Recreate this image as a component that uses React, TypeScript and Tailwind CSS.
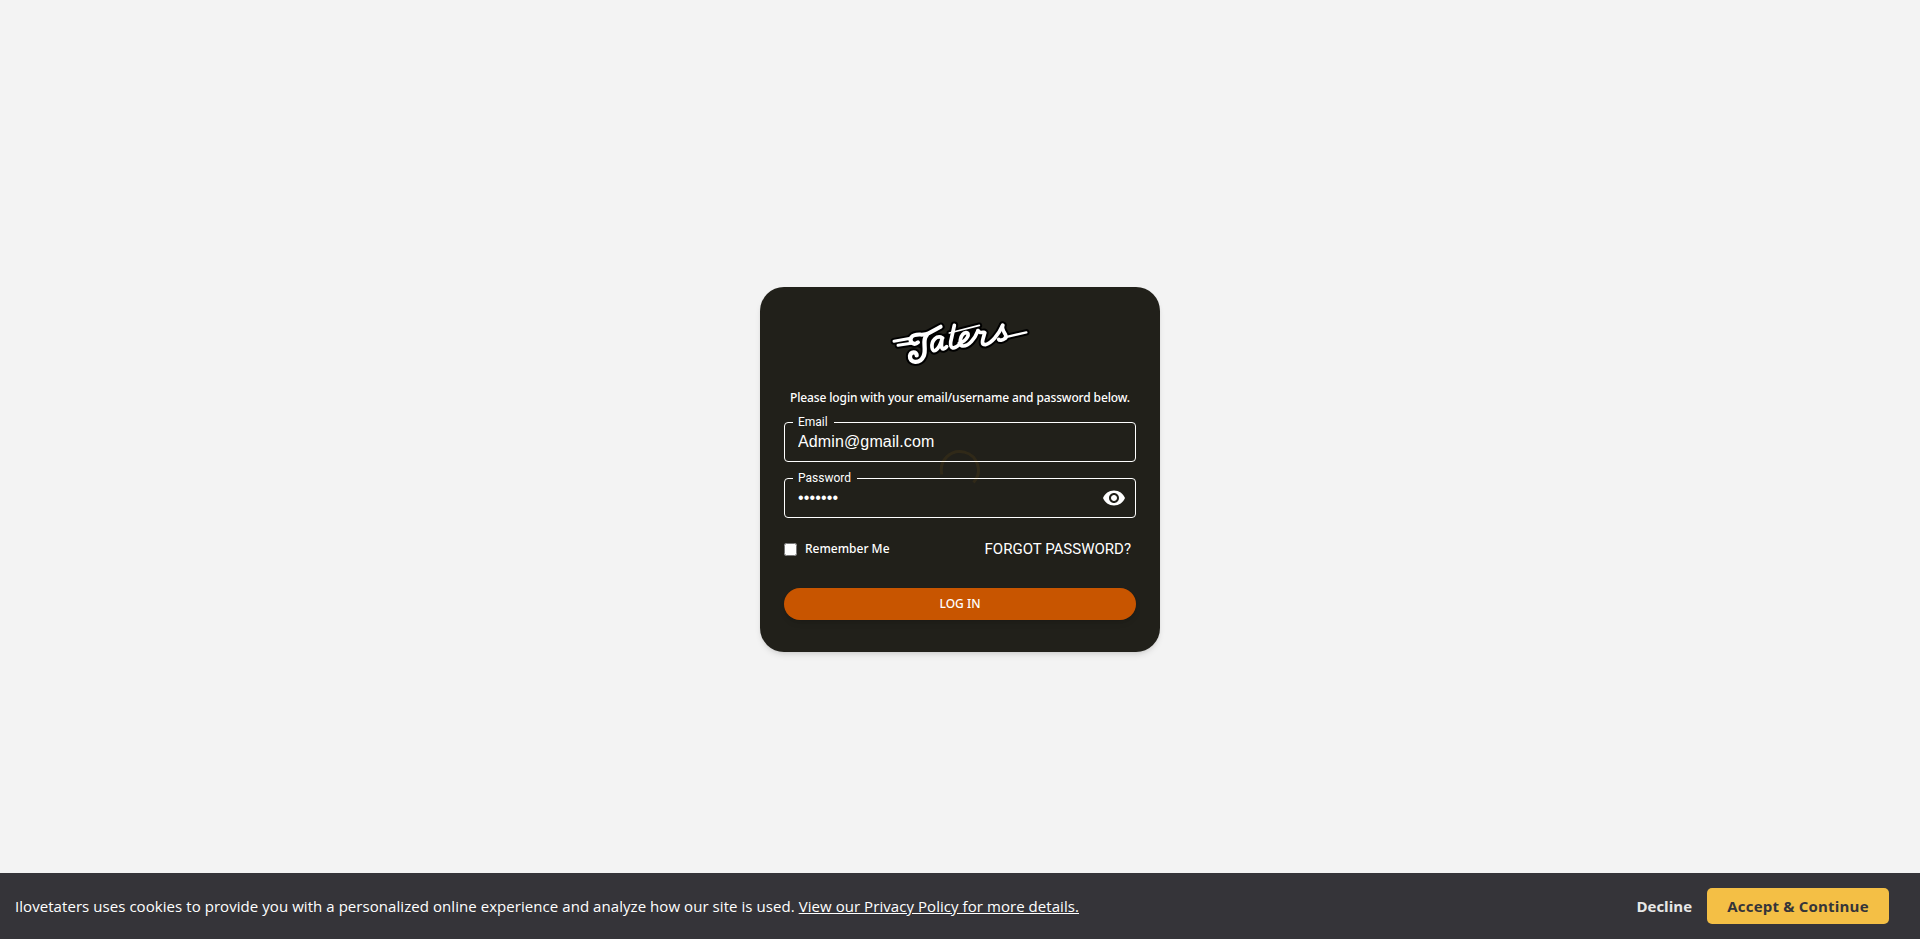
const wings = "M42 94 L92 85 M54 106 L94 100";
const strokes = [
  { d: "M114 97 C102 108 86 96 94 82 C106 66 128 80 146 70 L182 50", w: 12 },
  { d: "M140 76 C124 92 142 118 130 140 C120 162 88 160 90 138 C92 124 110 124 110 136", w: 13 },
  { d: "M188 84 C170 74 154 92 156 112 C158 132 176 122 186 88 C182 116 186 124 200 110", w: 11 },
  { d: "M223 46 L212 96 C210 118 222 118 238 104", w: 11 },
  { d: "M238 100 C262 92 272 68 258 68 C242 70 232 108 250 108 C266 108 284 88 294 62", w: 11 },
  { d: "M294 62 C298 74 318 62 314 70 C308 90 302 104 316 104 C334 100 356 74 368 46", w: 11 },
  { d: "M368 46 C362 64 388 78 374 86 C368 91 358 92 356 88", w: 11 },
  { d: "M374 82 L439 67", w: 7 },
  { d: "M208 69 L298 46", w: 5 },
];

function Logo() {
  return (
    <svg className="block h-[65px] w-[160px]" viewBox="0 0 480 195" fill="none" strokeLinecap="round" strokeLinejoin="round" aria-label="Taters">
      <g stroke="#000">
        <path d={wings} strokeWidth="20" />
        {strokes.map((s) => (
          <path key={s.d} d={s.d} strokeWidth={s.w + 12} />
        ))}
      </g>
      <path d="M100 84L140 80L190 72L298 48L280 90L230 112L150 126L110 110Z" fill="#000" />
      <g stroke="#fff">
        <path d={wings} strokeWidth="9" />
        {strokes.map((s) => (
          <path key={s.d} d={s.d} strokeWidth={s.w} />
        ))}
      </g>
    </svg>
  );
}

function Field({ label, type, value }: { label: string; type: string; value: string }) {
  return (
    <div className="relative h-10">
      <fieldset className="absolute inset-x-0 -top-[6px] bottom-0 rounded-[4px] border border-white pl-2">
        <legend className="h-3 pr-[6px] pl-[5px] font-['Roboto',sans-serif] text-xs leading-[13px] text-white">{label}</legend>
      </fieldset>
      <div className="relative flex h-10 items-center pr-[10px] pl-[14px]">
        <input
          type={type}
          defaultValue={value}
          aria-label={label}
          className="min-w-0 flex-1 bg-transparent pb-px font-['Liberation_Sans',sans-serif] text-base tracking-[0.13px] text-white outline-none"
        />
        {type === "password" && (
          <svg className="size-6" viewBox="0 0 24 24" fill="#fff">
            <path d="M12 4.5C7 4.5 2.73 7.61 1 12c1.73 4.39 6 7.5 11 7.5s9.27-3.11 11-7.5c-1.73-4.39-6-7.5-11-7.5M12 17c-2.76 0-5-2.24-5-5s2.24-5 5-5 5 2.24 5 5-2.24 5-5 5m0-8c-1.66 0-3 1.34-3 3s1.34 3 3 3 3-1.34 3-3-1.34-3-3-3" />
          </svg>
        )}
      </div>
    </div>
  );
}

export default function App() {
  return (
    <div className="relative flex h-[939px] flex-col bg-[#f3f3f3]">
      <main className="flex h-[939px] flex-col items-center pt-[287px]">
        <section className="flex h-[365px] w-[400px] flex-col rounded-3xl bg-[#21201a] px-6 pt-[23px] shadow-md">
          <div className="flex justify-center">
            <Logo />
          </div>
          <p className="mt-[14px] -mr-2 -ml-2 h-[18px] text-center font-['Noto_Sans',sans-serif] text-xs leading-[18px] font-medium tracking-[-0.13px] whitespace-nowrap text-white">
            Please login with your email/username and password below.
          </p>
          <div className="mt-[15px] flex flex-col gap-4">
            <Field label="Email" type="text" value="Admin@gmail.com" />
            <Field label="Password" type="password" value="1234567" />
          </div>
          <div className="mt-[19px] flex h-6 items-center justify-between pr-[5px]">
            <label className="flex items-center gap-2 font-['Noto_Sans',sans-serif] text-xs font-medium text-white">
              <input type="checkbox" className="size-[13px]" />
              Remember Me
            </label>
            <a className="font-['Roboto',sans-serif] text-[15px] text-white">FORGOT PASSWORD?</a>
          </div>
          <button className="mt-[27px] h-8 rounded-full bg-[#c85500] font-['Noto_Sans',sans-serif] text-xs font-medium text-white shadow-md">
            LOG IN
          </button>
        </section>
      </main>
      <svg className="absolute top-[449px] left-[939px] size-[42px]" viewBox="0 0 42 42" fill="none">
        <path d="M2.9 25.5A18.5 18.5 0 1 1 34.5 33.5" stroke="#ffb000" strokeOpacity="0.07" strokeWidth="3" />
      </svg>
      <footer className="absolute inset-x-0 bottom-0 flex h-[66px] items-center bg-[#353439] pr-[31px] pl-[15px] font-['Open_Sans',sans-serif] text-[15px] text-white">
        <p className="flex-1 tracking-[0.06px] whitespace-nowrap">
          Ilovetaters uses cookies to provide you with a personalized online experience and analyze how our site is used.{" "}
          <a className="underline">View our Privacy Policy for more details.</a>
        </p>
        <button className="mr-[15px] font-bold text-[#e8e8e8]">Decline</button>
        <button className="h-9 w-[182px] rounded-[5px] bg-[#f4bf45] font-bold tracking-[0.2px] text-[#353439]">Accept &amp; Continue</button>
      </footer>
    </div>
  );
}
